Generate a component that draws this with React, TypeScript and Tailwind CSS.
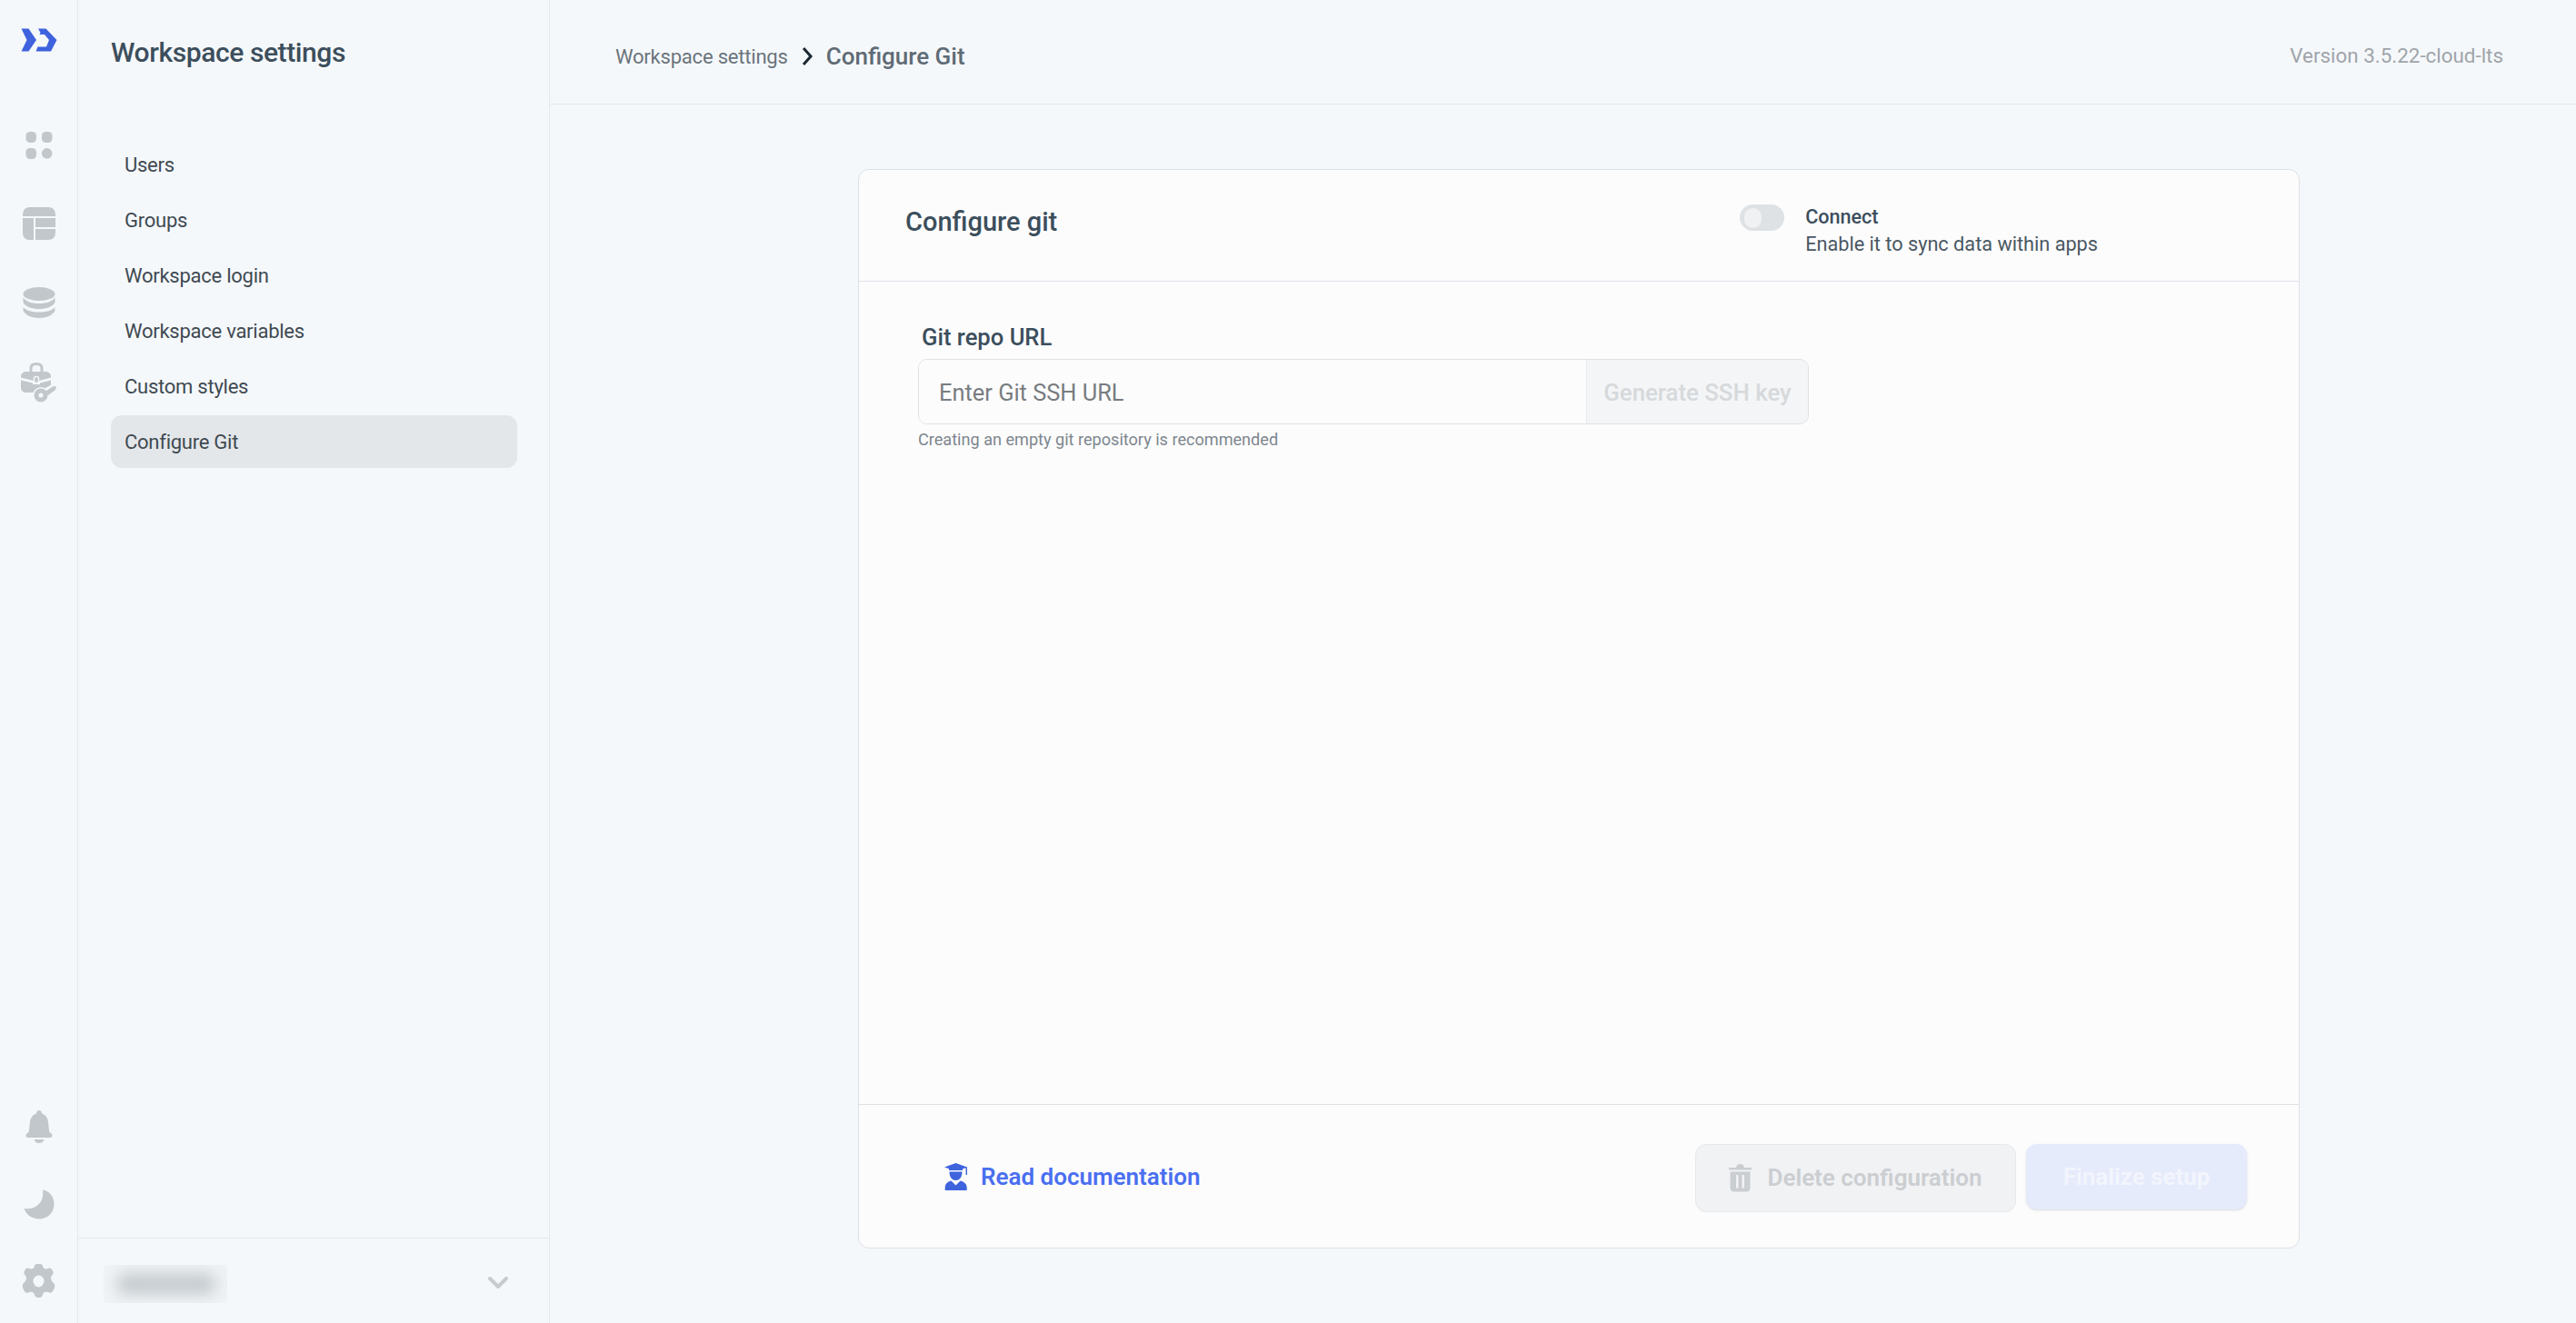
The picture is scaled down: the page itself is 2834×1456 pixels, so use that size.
import React from "react";

const font = { fontFamily: '"Roboto", "Liberation Sans", sans-serif' };

function Logo() {
  return (
    <svg width="40" height="26" viewBox="0 0 40 26" fill="#3e63dd">
      <path d="M0.5 0.5H8.5L17 13L8.5 25.5H0.5L6.5 13Z" />
      <path d="M19 0.5H27.5L39.5 13L33 25.5H16.5L18.5 20.5H28L31 13L26 7H20.5L21.5 5Z" />
    </svg>
  );
}

function Grid() {
  return (
    <svg width="30" height="30" viewBox="0 0 30 30" fill="#c1c7ca">
      <rect x="0.5" y="0" width="11.5" height="12" rx="4.5" />
      <rect x="18" y="0" width="11.5" height="12" rx="4.5" />
      <rect x="0.5" y="18" width="11.5" height="12" rx="4.5" />
      <circle cx="23.7" cy="23.8" r="5.8" />
    </svg>
  );
}

function TableIcon() {
  return (
    <svg width="36" height="36" viewBox="0 0 36 36" fill="#c1c7ca">
      <path d="M0 9C0 3 3 0 8 0H28C33 0 36 3 36 9V10H0Z" />
      <path d="M0 12H12V36H7C3 36 0 33 0 28Z" />
      <rect x="14" y="12" width="22" height="10" />
      <path d="M14 24H36V28C36 33 33 36 28 36H14Z" />
    </svg>
  );
}

function Db() {
  return (
    <svg width="36" height="34" viewBox="0 0 36 34" fill="#c1c7ca">
      <ellipse cx="18" cy="7.5" rx="17.5" ry="7.5" />
      <path d="M0.5 11.5C4 16 10 18 18 18C26 18 32 16 35.5 11.5V17C33 21.5 26 24 18 24C10 24 3 21.5 0.5 17Z" />
      <path d="M0.5 22C4 26 10 27.5 18 27.5C26 27.5 32 26 35.5 22V26C33 31 26 34 18 34C10 34 3 31 0.5 26Z" />
    </svg>
  );
}

function Toolbox() {
  return (
    <svg width="40" height="44" viewBox="0 0 40 44" fill="#c1c7ca">
      <path d="M11 10V6C11 3 13 1.5 17 1.5C21 1.5 23 3 23 6V10" fill="none" stroke="#c1c7ca" strokeWidth="3" />
      <path d="M0 15C0 12 3 10 6 10H27C30 10 33 12 33 15V16.5L20 20H14L0 16.5Z" />
      <path d="M0 19.5L13 22.5V24H21V22.5L33 19.5V28C33 31 30 33 27 33H6C3 33 0 31 0 28Z" />
      <rect x="14.5" y="15.5" width="5" height="7" rx="2" stroke="#f5f8fb" strokeWidth="1.5" />
      <path d="M22 36L38 27" stroke="#f5f8fb" strokeWidth="9" strokeLinecap="round" fill="none" />
      <circle cx="22" cy="36" r="9" fill="#f5f8fb" />
      <path d="M24 33.5L35 26.5L39 26L38 30L30 36Z" />
      <circle cx="22" cy="36" r="5" fill="#f5f8fb" stroke="#c1c7ca" strokeWidth="5" />
    </svg>
  );
}

function Bell() {
  return (
    <svg width="30" height="36" viewBox="0 0 30 36" fill="#c1c7ca">
      <path d="M15 0C17 0 18 1.5 18 3.5C22.5 5 24.5 8.5 25 13L26 22C26.3 24 27 24.5 28.5 25.5C30.5 27 29.5 30 27 30H3C0.5 30 -0.5 27 1.5 25.5C3 24.5 3.7 24 4 22L5 13C5.5 8.5 7.5 5 12 3.5C12 1.5 13 0 15 0Z" />
      <path d="M9.5 32H20.5C19.5 35 17.5 36 15 36C12.5 36 10.5 35 9.5 32Z" />
    </svg>
  );
}

function Moon() {
  return (
    <svg width="34" height="33" viewBox="0 0 34 33" fill="#c1c7ca">
      <path d="M21 0.5C29 2 33.5 8.5 33.5 16C33.5 26 26 32.5 17 32.5C9 32.5 2.5 27.5 0.5 21C12 22.5 23 16 21 0.5Z" />
    </svg>
  );
}

function Gear() {
  return (
    <svg width="37" height="37" viewBox="0 0 37 37" fill="#c1c7ca">
      <path
        fillRule="evenodd"
        d="M14 2C14 0.5 16 0 18.5 0C21 0 23 0.5 23 2C23 5 26 6.5 28.5 5C30.5 3.5 33 5 34 7.5C35 9.5 35 10.5 33.5 12C31.5 14 31.5 17.5 33.5 19.5C35.5 21 37 23 36 26C35 29 33 33 30 31.5C26.5 30 23.5 31 23 34C22.5 36.5 20.5 37 18.5 37C16.5 37 14.5 36.5 14 34C13.5 31 10.5 30 7 31.5C4 33 2 29 1 26C0 23 1.5 21 3.5 19.5C5.5 17.5 5.5 14 3.5 12C2 10.5 2 9.5 3 7.5C4 5 6.5 3.5 8.5 5C11 6.5 14 5 14 2ZM18.5 12.5A6 6.5 0 1 0 18.5 25.5A6 6.5 0 1 0 18.5 12.5Z"
      />
    </svg>
  );
}

function Scholar() {
  return (
    <svg width="25" height="30" viewBox="0 0 25 30" fill="#3e63dd">
      <path d="M12.5 0L25 4.5V13H23.6V5.2L20 6.4V8H5V6.2L0 4.5Z" />
      <path d="M5.5 9.5H19.5C19.5 15 17 19 12.5 19C8 19 5.5 15 5.5 9.5Z" />
      <path d="M7.5 19.5L12.5 24.5L17.5 19.5C22 20.5 24.7 23.5 24.7 27V30H0.7V27C0.7 23.5 3 20.5 7.5 19.5Z" />
    </svg>
  );
}

function Trash() {
  return (
    <svg width="25" height="31" viewBox="0 0 25 31" fill="#cbced1">
      <path d="M8 4C8.5 1.5 10 0 12.5 0C15 0 16.5 1.5 17 4H25V6.5H0V4Z" />
      <path fillRule="evenodd" d="M1.5 8.5H23.5V26C23.5 29 22 30.5 19 30.5H6C3 30.5 1.5 29 1.5 26ZM8 12V26.5H10.5V12ZM14.5 12V26.5H17V12Z" />
    </svg>
  );
}

const items = ["Users", "Groups", "Workspace login", "Workspace variables", "Custom styles", "Configure Git"];

export default function App() {
  return (
    <div style={font} className="flex h-[1456px] w-full overflow-hidden bg-[#f5f8fb] text-[#3c4e5c]">
      <aside className="flex w-[86px] shrink-0 flex-col items-center border-r border-[#e4e8ec] pt-[31px] pb-[28px]">
        <Logo />
        <div className="mt-[88px] flex flex-col items-center">
          <Grid />
          <div className="mt-[53px]"><TableIcon /></div>
          <div className="mt-[52px]"><Db /></div>
          <div className="mt-[49px]"><Toolbox /></div>
        </div>
        <div className="mt-auto flex flex-col items-center">
          <Bell />
          <div className="mt-[51px]"><Moon /></div>
          <div className="mt-[49px]"><Gear /></div>
        </div>
      </aside>

      <aside className="flex w-[519px] shrink-0 flex-col border-r border-[#e4e8ec]">
        <div className="flex-1 pt-[40px] pl-[36px] pr-[35px]">
          <h1 className="text-[30px] leading-[36px] font-medium tracking-[-0.4px] text-[#3c4e5c]">Workspace settings</h1>
          <nav className="mt-[76px] flex flex-col gap-[3px]">
            {items.map((it) => (
              <div
                key={it}
                className={
                  "flex h-[58px] items-center rounded-[12px] pl-[15px] text-[22px] tracking-[-0.25px] text-[#3f4a52] " +
                  (it === "Configure Git" ? "bg-[#e4e7ea]" : "")
                }
              >
                {it}
              </div>
            ))}
          </nav>
        </div>
        <div className="flex h-[94px] items-start justify-between border-t border-[#e4e8ec] pt-[29px] pl-[28px] pr-[45px]">
          <div className="relative h-[42px] w-[136px] overflow-hidden bg-[#f0f3f5]">
            <div className="absolute left-[14px] top-[9px] h-[24px] w-[110px] rounded-full bg-[#c6ccd0] blur-[8px]" />
          </div>
          <svg className="mt-[12px]" width="22" height="15" viewBox="0 0 22 15" fill="none" stroke="#c8cbcd" strokeWidth="4" strokeLinecap="round" strokeLinejoin="round">
            <path d="M2 3L11 12L20 3" />
          </svg>
        </div>
      </aside>

      <main className="flex min-w-0 flex-1 flex-col">
        <header className="flex h-[115px] shrink-0 items-center justify-between border-b border-[#e4e8ec] pr-[80px] pl-[72px] pt-[10px]">
          <div className="flex items-center">
            <span className="text-[22px] tracking-[-0.2px] text-[#6a747c]">Workspace settings</span>
            <svg className="mx-[15px]" width="12" height="20" viewBox="0 0 12 20" fill="none" stroke="#1d2730" strokeWidth="3">
              <path d="M2 1L10 10L2 19" />
            </svg>
            <span className="text-[26px] font-medium text-[#5f6b75]">Configure Git</span>
          </div>
          <span className="text-[22.4px] text-[#a0a4aa]">Version 3.5.22-cloud-lts</span>
        </header>

        <div className="flex-1 pt-[71px] pl-[339px]">
          <section className="flex h-[1188px] w-[1586px] flex-col rounded-[12px] border border-[#dde1e5] bg-[#fcfcfd]">
            <div className="flex h-[123px] shrink-0 border-b border-[#dde1e5] pl-[51px]">
              <h2 className="mt-[39px] text-[29px] leading-[36px] font-medium text-[#3c4e5c]">Configure git</h2>
              <div className="ml-auto mr-[221px] flex items-start pt-[38px]">
                <div className="flex h-[29px] w-[49px] items-center rounded-full bg-[#dfe2e5] pl-[5px]">
                  <div className="h-[22px] w-[19px] rounded-full bg-[#eff1f3]" />
                </div>
                <div className="ml-[23px] -mt-[1px]">
                  <div className="text-[21.6px] leading-[30px] font-medium text-[#3c4e5c]">Connect</div>
                  <div className="text-[21.7px] leading-[30px] text-[#4a5862]">Enable it to sync data within apps</div>
                </div>
              </div>
            </div>

            <div className="flex-1 pl-[65px] pt-[46px]">
              <label className="block pl-[4px] text-[25.6px] leading-[30px] font-medium text-[#3c4e5c]">Git repo URL</label>
              <div className="mt-[9px] flex h-[72px] w-[980px] overflow-hidden rounded-[10px] border border-[#dfe1e5]">
                <div className="flex flex-1 items-center bg-[#fcfcfd] pt-[2px] pl-[22px] text-[25.4px] text-[#787c80]">Enter Git SSH URL</div>
                <div className="flex w-[244px] items-center justify-center border-l border-[#e8eaec] bg-[#f4f5f7] pt-[2px] text-[25.8px] font-medium text-[#d6d9db]">Generate SSH key</div>
              </div>
              <p className="mt-[5px] text-[18.1px] leading-[24px] text-[#7d868d]">Creating an empty git repository is recommended</p>
            </div>

            <div className="flex h-[158px] shrink-0 items-start border-t border-[#dde1e5] pt-[43px] pr-[57px] pl-[94px]">
              <a className="mt-[21px] flex items-center text-[26px] leading-[30px] font-semibold text-[#4a6ff0]">
                <Scholar />
                <span className="ml-[15px]">Read documentation</span>
              </a>
              <div className="ml-auto flex items-start gap-[11px]">
                <button className="flex h-[75px] w-[353px] items-center justify-center rounded-[12px] border border-[#e6e8ea] bg-[#f1f2f4] text-[26px] font-semibold text-[#cbced1]">
                  <Trash />
                  <span className="ml-[17px]">Delete configuration</span>
                </button>
                <button className="flex h-[72px] w-[243px] items-center justify-center rounded-[12px] bg-[#e6ebfc] text-[26px] font-semibold text-[#f3f5fd] shadow-sm">
                  Finalize setup
                </button>
              </div>
            </div>
          </section>
        </div>
      </main>
    </div>
  );
}
